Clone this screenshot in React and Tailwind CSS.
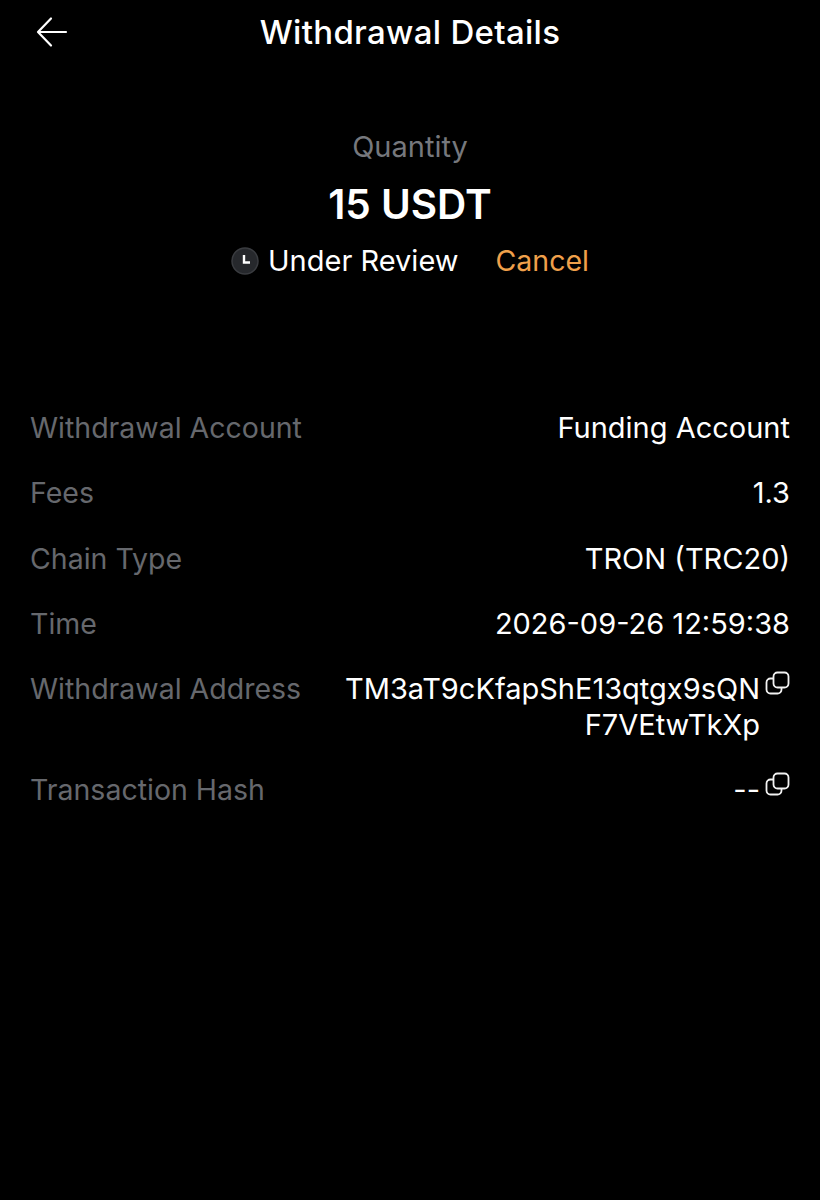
const rows = [
  { label: "Withdrawal Account", value: "Funding Account" },
  { label: "Fees", value: "1.3" },
  { label: "Chain Type", value: "TRON (TRC20)" },
  { label: "Time", value: "2026-09-26 12:59:38" },
  { label: "Withdrawal Address", value: ["TM3aT9cKfapShE13qtgx9sQN", "F7VEtwTkXp"], copy: true },
  { label: "Transaction Hash", value: "--", copy: true },
];

function CopyIcon() {
  return (
    <svg width="25" height="25" viewBox="0 0 25 25" fill="none" stroke="#f2f2f2" strokeWidth="1.8" className="shrink-0">
      <rect x="1.5" y="7.5" width="15" height="15" rx="4" />
      <rect x="8.5" y="1.5" width="15" height="15" rx="4" fill="#000" />
    </svg>
  );
}

function ClockIcon() {
  return (
    <svg width="28" height="28" viewBox="0 0 28 28" fill="none">
      <circle cx="14" cy="14" r="13" fill="#26282c" stroke="#3a3c40" strokeWidth="1.5" />
      <path d="M13 8v7.5h6" stroke="#fff" strokeWidth="2.4" />
    </svg>
  );
}

export default function App() {
  return (
    <div className="min-h-[1200px] bg-black text-white font-['Inter',sans-serif]">
      {/* Header */}
      <div className="flex items-center justify-between h-[64px] px-[36px]">
        <svg width="32" height="32" viewBox="0 0 32 32" fill="none" stroke="#fff" strokeWidth="2.2" strokeLinecap="round" strokeLinejoin="round">
          <path d="M30 16H3M15 2.5 2 16l13 13.5" />
        </svg>
        <h1 className="text-[33px] leading-[40px] font-medium tracking-[0.3px]">Withdrawal Details</h1>
        <div className="w-[32px]" />
      </div>

      {/* Amount and status */}
      <div className="flex flex-col items-center pt-[63px]">
        <p className="text-[29px] leading-[40px] text-[#76787d]">Quantity</p>
        <p className="mt-[14px] text-[40.5px] leading-[48px] font-semibold">15 USDT</p>
        <div className="mt-[12px] flex items-center text-[29px] leading-[40px]">
          <ClockIcon />
          <span className="ml-[9px]">Under Review</span>
          <span className="ml-[37px] text-[28.5px] text-[#f0a04b]">Cancel</span>
        </div>
      </div>

      {/* Detail rows */}
      <div className="mt-[129px] flex flex-col gap-[29.3px] px-[30px] text-[29px] leading-[36px]">
        {rows.map((row) => (
          <div key={row.label} className="flex justify-between">
            <span className="text-[28.5px] text-[#66686d]">{row.label}</span>
            <div className="flex items-start gap-[5px] text-right">
              <span>
                {Array.isArray(row.value)
                  ? row.value.map((line) => <span key={line} className="block">{line}</span>)
                  : row.value}
              </span>
              {row.copy && <CopyIcon />}
            </div>
          </div>
        ))}
      </div>
    </div>
  );
}
